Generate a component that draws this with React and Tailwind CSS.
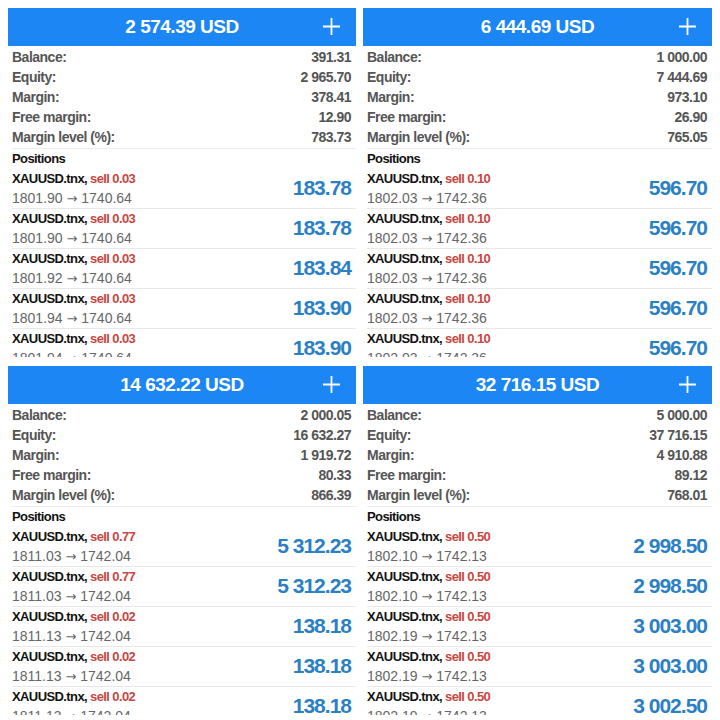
const accounts = [
  {
    total: '2 574.39 USD',
    stats: ['391.31', '2 965.70', '378.41', '12.90', '783.73'],
    positions: [
      { lot: '0.03', open: '1801.90', close: '1740.64', profit: '183.78' },
      { lot: '0.03', open: '1801.90', close: '1740.64', profit: '183.78' },
      { lot: '0.03', open: '1801.92', close: '1740.64', profit: '183.84' },
      { lot: '0.03', open: '1801.94', close: '1740.64', profit: '183.90' },
      { lot: '0.03', open: '1801.94', close: '1740.64', profit: '183.90' },
    ],
  },
  {
    total: '6 444.69 USD',
    stats: ['1 000.00', '7 444.69', '973.10', '26.90', '765.05'],
    positions: [
      { lot: '0.10', open: '1802.03', close: '1742.36', profit: '596.70' },
      { lot: '0.10', open: '1802.03', close: '1742.36', profit: '596.70' },
      { lot: '0.10', open: '1802.03', close: '1742.36', profit: '596.70' },
      { lot: '0.10', open: '1802.03', close: '1742.36', profit: '596.70' },
      { lot: '0.10', open: '1802.03', close: '1742.36', profit: '596.70' },
    ],
  },
  {
    total: '14 632.22 USD',
    stats: ['2 000.05', '16 632.27', '1 919.72', '80.33', '866.39'],
    positions: [
      { lot: '0.77', open: '1811.03', close: '1742.04', profit: '5 312.23' },
      { lot: '0.77', open: '1811.03', close: '1742.04', profit: '5 312.23' },
      { lot: '0.02', open: '1811.13', close: '1742.04', profit: '138.18' },
      { lot: '0.02', open: '1811.13', close: '1742.04', profit: '138.18' },
      { lot: '0.02', open: '1811.13', close: '1742.04', profit: '138.18' },
    ],
  },
  {
    total: '32 716.15 USD',
    stats: ['5 000.00', '37 716.15', '4 910.88', '89.12', '768.01'],
    positions: [
      { lot: '0.50', open: '1802.10', close: '1742.13', profit: '2 998.50' },
      { lot: '0.50', open: '1802.10', close: '1742.13', profit: '2 998.50' },
      { lot: '0.50', open: '1802.19', close: '1742.13', profit: '3 003.00' },
      { lot: '0.50', open: '1802.19', close: '1742.13', profit: '3 003.00' },
      { lot: '0.50', open: '1802.19', close: '1742.13', profit: '3 002.50' },
    ],
  },
];

const labels = ['Balance:', 'Equity:', 'Margin:', 'Free margin:', 'Margin level (%):'];

const Panel = ({ account }) => (
  <div className="flex flex-col overflow-hidden bg-white">
    <div className="relative flex h-[38px] shrink-0 items-center justify-center bg-[#1c86f4]">
      <span className="text-[19px] font-bold text-white tracking-[-0.5px]">{account.total}</span>
      <svg className="absolute right-[16px] top-[10px]" width="17" height="17" viewBox="0 0 17 17">
        <path d="M8.5 0v17M0 8.5h17" stroke="white" strokeWidth="1.8" />
      </svg>
    </div>
    <div className="flex flex-col pt-[1px]">
      {labels.map((label, i) => (
        <div key={label} className="flex h-[20px] items-center justify-between pl-[4px] pr-[5px] text-[14px] font-bold tracking-[-0.5px] text-[#555]">
          <span>{label}</span>
          <span>{account.stats[i]}</span>
        </div>
      ))}
    </div>
    <div className="ml-[4px] mt-[1px] border-t border-[#ececec]" />
    <div className="flex h-[20px] items-center pl-[4px] text-[13px] font-bold tracking-[-0.6px] text-[#111]">Positions</div>
    {account.positions.map((p, i) => (
      <div key={i} className="ml-[4px] flex h-[40px] shrink-0 items-center justify-between border-b border-[#e8e8e8] pr-[5px]">
        <div className="flex flex-col">
          <div className="h-[20px] text-[13px] font-bold leading-[20px] tracking-[-0.6px] text-[#111]">
            XAUUSD.tnx, <span className="text-[#c9463d]">sell {p.lot}</span>
          </div>
          <div className="h-[19px] text-[14px] leading-[19px] text-[#666]">
            {p.open}{' '}
            <span style={{ fontFamily: '"DejaVu Sans", sans-serif' }} className="text-[13px]">→</span>{' '}
            {p.close}
          </div>
        </div>
        <span className="text-[21px] font-bold tracking-[-1px] text-[#2b7fc3]">{p.profit}</span>
      </div>
    ))}
  </div>
);

export default function App() {
  return (
    <div
      className="grid h-[720px] w-[720px] grid-cols-[348px_349px] grid-rows-[349px_349px] gap-x-[7px] gap-y-[9px] bg-white p-[8px]"
      style={{ fontFamily: '"Liberation Sans", Arial, sans-serif' }}
    >
      {accounts.map((a, i) => (
        <Panel key={i} account={a} />
      ))}
    </div>
  );
}
